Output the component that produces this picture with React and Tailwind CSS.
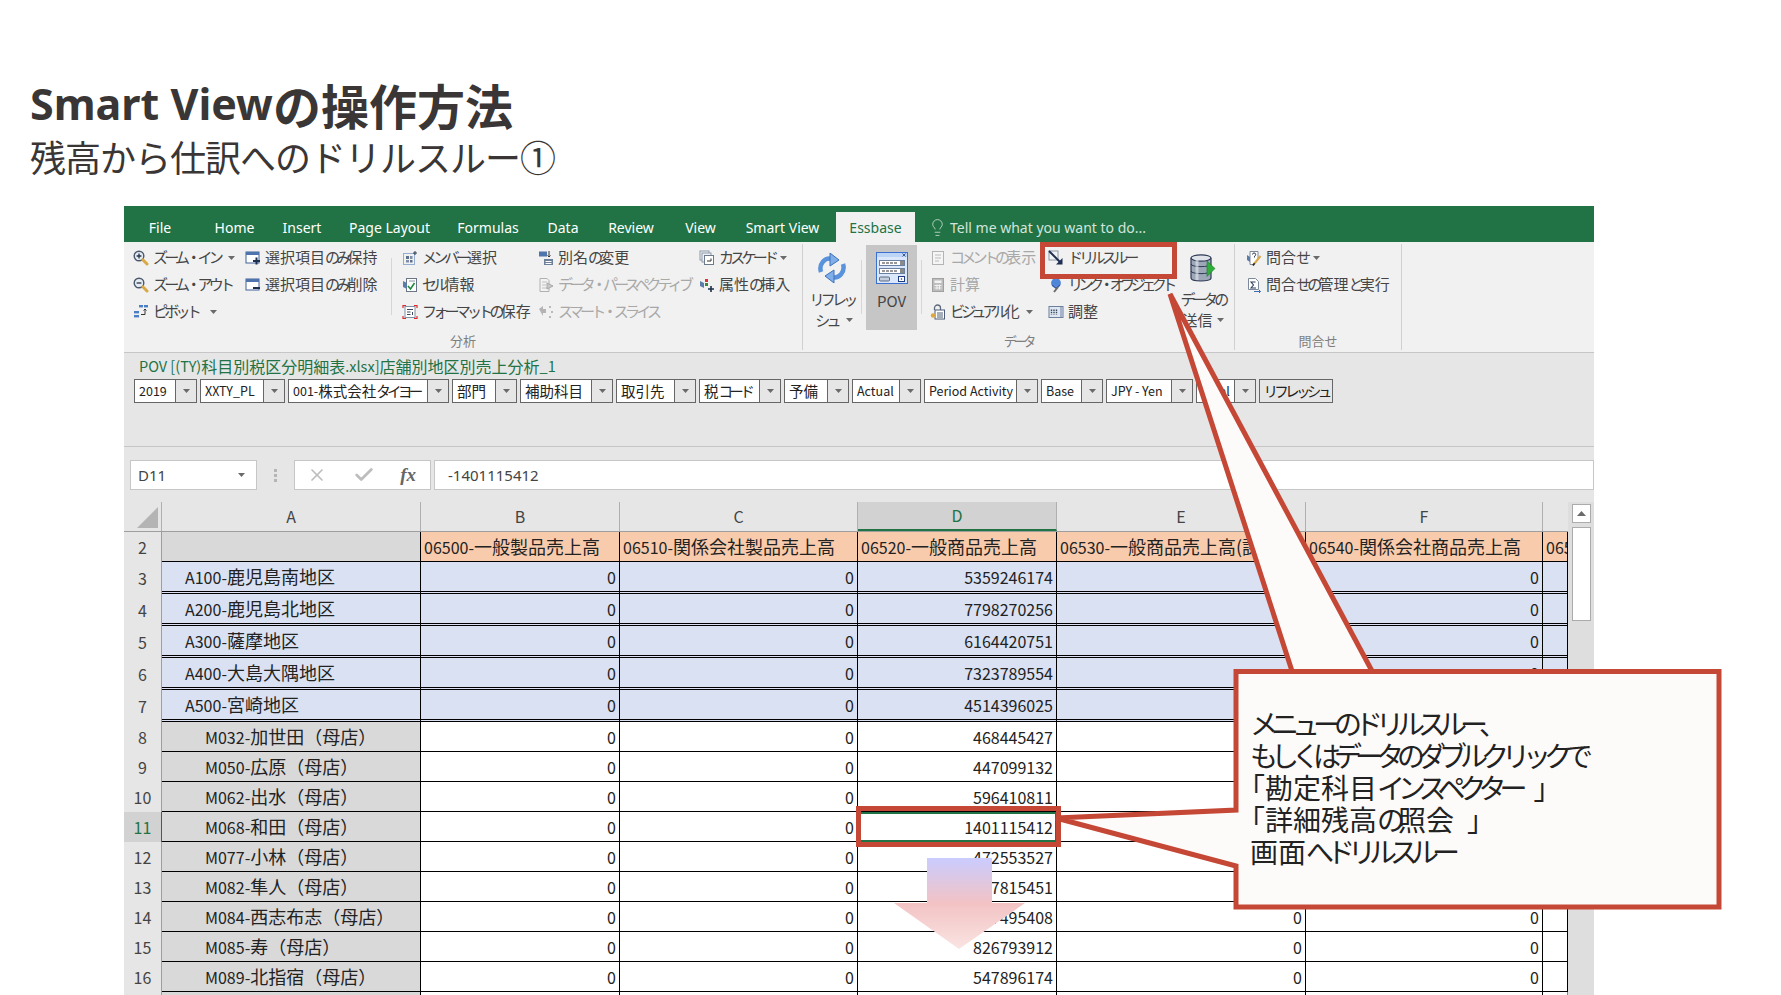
import React from "react";
import { Lightbulb, X, Check } from "lucide-react";

const COLS = "grid grid-cols-[38px_259px_199px_238px_199px_249px_237px_25px] shrink-0";

function J({ t }) {
  const parts = t.split(/([ぁ-ヿ・]+)/);
  return (
    <>
      {parts.map((p, i) =>
        i % 2 === 1 ? (
          <span key={i} className="tracking-[-0.25em]">{p}</span>
        ) : (
          <span key={i}>{p}</span>
        )
      )}
    </>
  );
}

const S = ({ children, w = 16, h = 16, vb = "0 0 16 16" }) => (
  <svg width={w} height={h} viewBox={vb} fill="none" className="shrink-0">{children}</svg>
);

const Mag = ({ minus }) => (
  <S>
    <circle cx="6" cy="6" r="4.8" fill="#e4ebf3" stroke="#4b586c" strokeWidth="1.4" />
    <path d={minus ? "M3.6 6h4.8" : "M3.6 6h4.8M6 3.6v4.8"} stroke="#27344a" strokeWidth="1.3" />
    <path d="M9.8 9.8 14 14" stroke="#d8a944" strokeWidth="3" strokeLinecap="round" />
  </S>
);
const Pivot = () => (
  <S>
    <rect x="6" y="1" width="4" height="2.4" fill="#4a7fc8" />
    <rect x="11" y="1" width="4" height="2.4" fill="#4a7fc8" />
    <rect x="1" y="7" width="5" height="2.4" fill="#4a7fc8" />
    <rect x="1" y="11" width="5" height="2.4" fill="#4a7fc8" />
    <path d="M8 10.5h4V5M10.5 6.5 12 5l1.5 1.5" stroke="#333" />
  </S>
);
const Win = ({ minus }) => (
  <S>
    <rect x="1" y="2" width="13" height="11" fill="#fff" stroke="#42639a" />
    <rect x="1" y="2" width="13" height="3" fill="#4f74ad" />
    <path d={minus ? "M8 11h7" : "M8 11h7M11.5 7.5v7"} stroke="#1d2f4d" strokeWidth="2" />
  </S>
);
const Member = () => (
  <S>
    <rect x="1.5" y="3.5" width="11" height="11" stroke="#3a66b0" strokeDasharray="1 1" />
    <rect x="4" y="6" width="3" height="3" fill="#5d6f8e" />
    <rect x="8" y="6" width="2.5" height="3" fill="#7e8ea8" />
    <rect x="4" y="10" width="3" height="2.5" fill="#7e8ea8" />
    <rect x="8" y="10" width="2.5" height="2.5" fill="#5d6f8e" />
    <path d="M11 3h4M13 1v4" stroke="#2d3a50" />
  </S>
);
const CellInfo = () => (
  <S>
    <rect x="4.5" y="1.5" width="10" height="13" fill="#fff" stroke="#6a7686" />
    <path d="M1 4 5 6v6L1 10z" fill="#5b7ba8" />
    <path d="M6 9l2.5 3 4-6" stroke="#1f8a3c" strokeWidth="1.6" />
    <path d="M7 4h6" stroke="#8894a5" />
  </S>
);
const Format = () => (
  <S>
    <path d="M1 4V1.5h3M12 1.5h3V4M15 12v2.5h-3M4 14.5H1V12" stroke="#e02828" strokeWidth="1.2" />
    <rect x="3" y="2.5" width="10" height="11" fill="#fff" stroke="#8190a5" />
    <path d="M5 5.5h6M5 8h3.5M5 10.5h3.5M10.5 8v3" stroke="#3e4a5c" />
  </S>
);
const Alias = () => (
  <S>
    <rect x="1" y="1.5" width="8" height="5" fill="#4f74ad" />
    <rect x="6" y="9" width="9" height="6" fill="#6e7f98" />
    <path d="M7.5 11.5h6M7.5 13.5h6" stroke="#fff" />
    <path d="M11 1v6M9.5 5.5 11 7l1.5-1.5" stroke="#333" />
  </S>
);
const Persp = () => (
  <S>
    <path d="M2 1.5h7l2 2v11H2z" fill="#f3f3f3" stroke="#b0b0b0" />
    <path d="M4 5h5M4 8h4M4 11h5" stroke="#c0c0c0" />
    <path d="M9 6l6 3-6 3z" fill="#c9c9c9" stroke="#a8a8a8" />
  </S>
);
const Slice = () => (
  <S>
    <path d="M1 5l4-3v3h3v4H5v3z" fill="#b4b4b4" />
    <path d="M11 3h3M14 7v2M11 13h3" stroke="#a8a8a8" strokeWidth="1.5" strokeDasharray="2 1" />
  </S>
);
const Cascade = () => (
  <S>
    <rect x="1" y="1" width="9" height="9" fill="#eef1f5" stroke="#8d99a9" />
    <rect x="3" y="3" width="9" height="9" fill="#eef1f5" stroke="#8d99a9" />
    <rect x="5.5" y="5.5" width="9" height="9" fill="#fff" stroke="#6d7a8c" />
    <path d="M8 11h4M12 8.5V11" stroke="#333" />
  </S>
);
const Attr = () => (
  <S>
    <path d="M1 4l4 2v5L1 9z" fill="#5b7ba8" />
    <rect x="6" y="2" width="3" height="3" fill="#d33" />
    <rect x="6" y="6" width="3" height="3" fill="#3a8a3a" />
    <path d="M9 12h6M12 9v6" stroke="#1d2f4d" strokeWidth="1.6" />
  </S>
);
const Comment = () => (
  <S>
    <rect x="2.5" y="1.5" width="11" height="13" fill="#f5f5f5" stroke="#b4b4b4" />
    <path d="M5 5h6M5 8h6M5 11h4" stroke="#bcbcbc" />
  </S>
);
const Calc = () => (
  <S>
    <rect x="2.5" y="1.5" width="11" height="13" fill="#bdbdbd" stroke="#a0a0a0" />
    <rect x="4.5" y="3.5" width="7" height="2.5" fill="#f3f3f3" />
    <path d="M4.5 8.5h7M4.5 11h7M7 7.5v5M9.5 7.5v5" stroke="#f3f3f3" />
  </S>
);
const Vis = () => (
  <S>
    <path d="M4.5 6V4a3 3 0 0 1 6 0v2" stroke="#5d6a7c" strokeWidth="1.3" />
    <rect x="5" y="6" width="9.5" height="9" fill="#fff" stroke="#4d5d76" />
    <path d="M7 9h6M7 11h6M7 13h6" stroke="#4d5d76" />
    <circle cx="3" cy="11.5" r="2.2" fill="#dba93f" />
  </S>
);
const Drill = () => (
  <S>
    <rect x="1" y="1" width="9" height="9" fill="#f3f3f3" stroke="#8b97a8" />
    <path d="M1 1 13.5 13.5" stroke="#1f2f52" strokeWidth="2" />
    <path d="M14.5 8v6.5H8z" fill="#1f2f52" />
  </S>
);
const Link = () => (
  <S>
    <path d="M8 1a6 6 0 0 1 5 5l-5 4-5-4a6 6 0 0 1 5-5z" fill="#4f86d8" />
    <path d="M3 6l5 4 5-4-1 3-4 3-4-3z" fill="#2e5fb2" />
    <path d="M10 10l-4 5" stroke="#6a6a6a" strokeWidth="2" />
  </S>
);
const Adjust = () => (
  <S>
    <rect x="1" y="2.5" width="14" height="11" fill="#dfe7f2" stroke="#6c7f9c" />
    <rect x="12" y="3" width="3" height="10" fill="#a5b4ca" />
    <path d="M3.5 5.5v5M6 5.5v5M8.5 5.5v5" stroke="#3a4a62" strokeWidth="1.4" strokeDasharray="1.5 .8" />
  </S>
);
const Query = () => (
  <S>
    <path d="M4 1.5h8v8l-4 5H4z" fill="#fff" stroke="#7d8a9c" />
    <path d="M6.5 4.5a1.6 1.6 0 1 1 2 1.6V7.5" stroke="#2d3a50" />
    <path d="M1 5l3 2v5L1 10z" fill="#5b7ba8" />
    <path d="M14.5 6 8 14" stroke="#d8a944" strokeWidth="2" />
    <path d="M8.5 13.2 7 15.5" stroke="#222" strokeWidth="1.6" />
  </S>
);
const QMan = () => (
  <S>
    <path d="M2.5 1.5h7l3 3v8h-10z" fill="#fff" stroke="#7d8a9c" />
    <path d="M9.5 5H5l2.5 3L5 11h5" stroke="#2e3f5c" strokeWidth="1.1" />
    <path d="M8 14.5h6.5M13 13l1.5 1.5L13 16" stroke="#3c6eb4" />
  </S>
);

const Refresh = () => (
  <svg width="30" height="30" viewBox="0 0 30 30" fill="none">
    <path d="M4 19C1.5 11 8 4 15 6" stroke="#5a92dc" strokeWidth="4.5" />
    <path d="M13 0l9 7-9 6z" fill="#7faee8" stroke="#3c70bd" strokeLinejoin="round" />
    <path d="M26 11c2.5 8-4 15-11 13" stroke="#5a92dc" strokeWidth="4.5" />
    <path d="M17 30l-9-7 9-6z" fill="#7faee8" stroke="#3c70bd" strokeLinejoin="round" />
  </svg>
);
const PovIcon = () => (
  <svg width="32" height="32" viewBox="0 0 32 32" fill="none">
    <rect x=".5" y=".5" width="31" height="31" fill="#dbe8fb" stroke="#3b6fd0" />
    <rect x="1" y="1" width="30" height="4" fill="#bcd4f5" />
    <path d="M26.5 1.5l3 3M29.5 1.5l-3 3" stroke="#1f3a80" strokeWidth=".8" />
    <rect x="3.5" y="8.5" width="25" height="5" fill="#fff" stroke="#6b7f9f" />
    <rect x="3.5" y="16.5" width="25" height="5" fill="#fff" stroke="#6b7f9f" />
    <path d="M6 11h16M6 19h16" stroke="#333" strokeDasharray="3 1" />
    <rect x="24" y="9" width="4" height="4" fill="#8a8a8a" />
    <rect x="24" y="17" width="4" height="4" fill="#8a8a8a" />
    <rect x="3.5" y="25" width="10" height="4" rx="1" fill="#c4cede" stroke="#5a6a84" />
    <rect x="22.5" y="24.5" width="6" height="5" fill="#fff" stroke="#1f3a80" />
    <circle cx="25.5" cy="27" r=".8" fill="#1f3a80" />
  </svg>
);
const Db = () => (
  <svg width="26" height="28" viewBox="0 0 26 28" fill="none">
    <path d="M1 4v20c0 4 20 4 20 0V4" fill="#9da7b8" stroke="#2e3a55" strokeWidth="1.2" />
    <path d="M1 10c0 3.5 20 3.5 20 0M1 17c0 3.5 20 3.5 20 0" stroke="#2e3a55" />
    <ellipse cx="11" cy="4" rx="10" ry="3.2" fill="#dfe3ea" stroke="#2e3a55" strokeWidth="1.2" />
    <path d="M7 6v20" stroke="#e6e9ef" strokeWidth="3" opacity=".6" />
    <path d="M17 7l8 7.5-8 8z" fill="#2fae3a" stroke="#1d7a28" strokeWidth=".6" />
  </svg>
);

const Caret = ({ cls = "" }) => (
  <svg width="7" height="4" viewBox="0 0 7 4" className={"shrink-0 " + cls}>
    <path d="M0 0h7L3.5 4z" fill="#6a6a6a" />
  </svg>
);

function Item({ icon, label, muted, caret, tight }) {
  return (
    <div className={"h-[27px] flex items-center whitespace-nowrap " + (muted ? "text-[#a8a8a8]" : "text-[#454545]")}>
      <span className="w-[20px] shrink-0 flex">{icon}</span>
      {tight ? <span className="tracking-[-0.3em]">{label}</span> : <span><J t={label} /></span>}
      {caret}
    </div>
  );
}

const tabs = [
  ["File", "w-[72px]"],
  ["Home", "w-[77px]"],
  ["Insert", "w-[58px]"],
  ["Page Layout", "w-[117px]"],
  ["Formulas", "w-[80px]"],
  ["Data", "w-[70px]"],
  ["Review", "w-[66px]"],
  ["View", "w-[73px]"],
  ["Smart View", "w-[91px]"],
];

const povs = [
  ["2019", "", "w-[63px]"],
  ["XXTY_PL", "", "w-[85px]"],
  ["001-", "株式会社タイヨー", "w-[161px]"],
  ["", "部門", "w-[65px]"],
  ["", "補助科目", "w-[93px]"],
  ["", "取引先", "w-[80px]"],
  ["", "税コード", "w-[82px]"],
  ["", "予備", "w-[65px]"],
  ["Actual", "", "w-[69px]"],
  ["Period Activity", "", "w-[114px]"],
  ["Base", "", "w-[62px]"],
  ["JPY - Yen", "", "w-[87px]"],
  ["Total", "", "w-[60px]"],
];

const headers = [
  "06500-一般製品売上高",
  "06510-関係会社製品売上高",
  "06520-一般商品売上高",
  "06530-一般商品売上高(課税)",
  "06540-関係会社商品売上高",
  "06550-売上高",
];

const rows = [
  [3, "A100-鹿児島南地区", 5359246174, 1],
  [4, "A200-鹿児島北地区", 7798270256, 1],
  [5, "A300-薩摩地区", 6164420751, 1],
  [6, "A400-大島大隅地区", 7323789554, 1],
  [7, "A500-宮崎地区", 4514396025, 1],
  [8, "M032-加世田（母店）", 468445427, 0],
  [9, "M050-広原（母店）", 447099132, 0],
  [10, "M062-出水（母店）", 596410811, 0],
  [11, "M068-和田（母店）", 1401115412, 0],
  [12, "M077-小林（母店）", 472553527, 0],
  [13, "M082-隼人（母店）", 467815451, 0],
  [14, "M084-西志布志（母店）", 447495408, 0],
  [15, "M085-寿（母店）", 826793912, 0],
  [16, "M089-北指宿（母店）", 547896174, 0],
];

function Row({ n, label, d, top }) {
  const [code, name] = label.split("-");
  const sel = n === 11;
  const line = top ? "border-b-[3px] border-double border-black" : "border-b border-black";
  const bg = top ? "bg-[#d9e1f2]" : "bg-white";
  const h = top ? "h-[32px]" : "h-[30px]";
  const num = "flex items-center justify-end pr-[3px] border-r border-black " + line + " " + bg;
  return (
    <div className={COLS + " " + h}>
      <div className={"flex items-center justify-center border-r " + (sel ? "bg-[#d2d2d2] text-[#217346] border-[#217346]" : "bg-[#e6e6e6] text-[#444] border-[#9e9e9e]")}>{n}</div>
      <div className={"flex items-center whitespace-nowrap border-r border-black text-[#222] " + line + " " + (top ? "pl-[23px] bg-[#d9e1f2]" : "pl-[43px] bg-[#d9d9d9]")}>
        <span>{code}-</span>
        <span className="text-[18px]">{name}</span>
      </div>
      <div className={num}>0</div>
      <div className={num}>0</div>
      <div className={num + (sel ? " outline-2 -outline-offset-2 outline-[#217346]" : "")}>{d}</div>
      <div className={num}>0</div>
      <div className={num}>0</div>
      <div className={"border-r border-[#888] " + line + " " + bg} />
    </div>
  );
}

export default function App() {
  return (
    <div className="relative w-[1781px] h-[995px] overflow-hidden bg-white font-['Noto_Sans_CJK_JP',sans-serif] text-[#222]">
      <header className="h-[206px] pl-[30px] pt-[77px] text-[#3a3635]">
        <h1 className="h-[54px] flex items-center font-bold text-[48px] whitespace-nowrap">
          <span className="font-['Noto_Sans',sans-serif] text-[43px]">Smart View</span>
          <span>の操作方法</span>
        </h1>
        <p className="h-[50px] flex items-center text-[36px] tracking-[-1px] whitespace-nowrap">残高から仕訳へのドリルスルー①</p>
      </header>

      <main className="ml-[124px] w-[1470px] h-[789px] flex flex-col bg-[#e6e6e6]">
        <nav className="h-[36px] shrink-0 bg-[#217346] flex text-white text-[14px] font-['Noto_Sans',sans-serif] whitespace-nowrap">
          {tabs.map(([t, w]) => (
            <div key={t} className={w + " flex items-center justify-center pt-[6px]"}>{t}</div>
          ))}
          <div className="ml-[8px] w-[79px] self-end h-[30px] bg-[#f1f1f1] text-[#217346] flex items-center justify-center">Essbase</div>
          <div className="ml-[13px] flex items-center gap-[3px] pt-[6px] text-[#d3e4da]">
            <Lightbulb size={19} strokeWidth={1} />
            <span>Tell me what you want to do...</span>
          </div>
        </nav>

        <section className="h-[111px] bg-[#f1f1f1] border-b border-[#c6c6c6] flex text-[15px] shrink-0">
          <div className="w-[679px] flex flex-col border-r border-[#d0d0d0] my-[2px]">
            <div className="h-[88px] flex pl-[9px]">
              <div className="w-[112px]">
                <Item icon={<Mag />} label="ズーム・イン" caret={<Caret cls="ml-[8px]" />} />
                <Item icon={<Mag minus />} label="ズーム・アウト" />
                <Item icon={<Pivot />} label="ピボット" caret={<Caret cls="ml-[12px]" />} />
              </div>
              <div className="w-[146px]">
                <Item icon={<Win />} label="選択項目のみ保持" />
                <Item icon={<Win minus />} label="選択項目のみ削除" />
              </div>
              <div className="w-px h-[57px] mt-[14px] bg-[#d6d6d6]" />
              <div className="ml-[10px] w-[136px]">
                <Item icon={<Member />} label="メンバー選択" />
                <Item icon={<CellInfo />} label="セル情報" />
                <Item icon={<Format />} label="フォーマットの保存" />
              </div>
              <div className="w-[161px]">
                <Item icon={<Alias />} label="別名の変更" />
                <Item icon={<Persp />} muted label="データ・パースペクティブ" />
                <Item icon={<Slice />} muted label="スマート・スライス" />
              </div>
              <div className="w-[103px]">
                <Item icon={<Cascade />} label="カスケード" caret={<Caret cls="ml-[5px]" />} />
                <Item icon={<Attr />} label="属性の挿入" />
              </div>
            </div>
            <div className="flex-1 flex items-center justify-center text-[13px] text-[#7f7f7f]">分析</div>
          </div>

          <div className="w-[432px] flex flex-col border-r border-[#d0d0d0] my-[2px]">
            <div className="h-[88px] flex">
              <div className="w-[58px] flex flex-col items-center pt-[9px] text-[#454545]">
                <Refresh />
                <div className="h-[21px] mt-[6px] flex items-center"><J t="リフレッ" /></div>
                <div className="h-[20px] flex items-center gap-[4px]"><J t="シュ" /><Caret /></div>
              </div>
              <div className="w-px h-[54px] mt-[16px] bg-[#d6d6d6]" />
              <div className="ml-[4px] w-[51px] h-[85px] mt-[1px] bg-[#c6c6c6] flex flex-col items-center pt-[7px] text-[#454545]">
                <PovIcon />
                <div className="mt-[6px]">POV</div>
              </div>
              <div className="ml-[4px] w-px h-[54px] mt-[16px] bg-[#d6d6d6]" />
              <div className="ml-[8px] w-[118px]">
                <Item icon={<Comment />} muted label="コメントの表示" />
                <Item icon={<Calc />} muted label="計算" />
                <Item icon={<Vis />} label="ビジュアル化" caret={<Caret cls="ml-[6px]" />} />
              </div>
              <div className="w-[128px]">
                <Item icon={<Drill />} label="ドリルスルー" />
                <Item icon={<Link />} tight label="リンク・オブジェクト" />
                <Item icon={<Adjust />} label="調整" />
              </div>
              <div className="w-[54px] flex flex-col items-center pt-[10px] text-[#454545] whitespace-nowrap">
                <Db />
                <div className="h-[21px] mt-[7px] flex items-center"><J t="データの" /></div>
                <div className="h-[20px] flex items-center gap-[4px]">送信<Caret /></div>
              </div>
            </div>
            <div className="flex-1 flex items-center justify-center text-[13px] text-[#7f7f7f]"><J t="データ" /></div>
          </div>

          <div className="w-[167px] flex flex-col border-r border-[#d0d0d0] my-[2px]">
            <div className="h-[88px] pl-[11px]">
              <Item icon={<Query />} label="問合せ" caret={<Caret cls="ml-[6px]" />} />
              <Item icon={<QMan />} label="問合せの管理と実行" />
            </div>
            <div className="flex-1 flex items-center justify-center text-[13px] text-[#7f7f7f]">問合せ</div>
          </div>
        </section>

        <section className="h-[94px] shrink-0 border-b border-[#c6c6c6] flex flex-col">
          <div className="h-[26px] pl-[15px] flex items-center text-[16px] text-[#217346] whitespace-nowrap">
            <span className="text-[14.5px]">POV [(TY)</span>
            <span>科目別税区分明細表</span>
            <span className="text-[14.5px]">.xlsx]</span>
            <span>店舗別地区別売上分析</span>
            <span className="text-[14.5px]">_1</span>
          </div>
          <div className="flex gap-[3px] pl-[10px] text-[14.5px] text-[#222]">
            {povs.map(([latin, cjk, w]) => (
              <div key={latin + cjk} className={w + " h-[24px] flex border border-[#666] bg-white"}>
                <div className="flex-1 min-w-0 flex items-center pl-[4px] whitespace-nowrap overflow-hidden">
                  <span className="text-[12.5px]">{latin}</span>
                  <J t={cjk} />
                </div>
                <div className="w-[21px] shrink-0 bg-[#e6e6e6] border-l border-[#666] flex items-center justify-center"><Caret /></div>
              </div>
            ))}
            <div className="w-[74px] h-[24px] flex items-center justify-center border border-[#666] bg-[#e6e6e6]"><J t="リフレッシュ" /></div>
          </div>
        </section>

        <section className="h-[43px] shrink-0 pt-[13px] flex font-['Noto_Sans',sans-serif] text-[15px] text-[#444]">
          <div className="ml-[6px] w-[127px] h-[30px] bg-white border border-[#c6c6c6] flex items-center justify-between pl-[7px] pr-[11px]">
            D11<Caret />
          </div>
          <div className="w-[37px] flex flex-col items-center justify-center gap-[2px]">
            <i className="w-[3px] h-[3px] bg-[#b5b5b5]" />
            <i className="w-[3px] h-[3px] bg-[#b5b5b5]" />
            <i className="w-[3px] h-[3px] bg-[#b5b5b5]" />
          </div>
          <div className="w-[137px] h-[30px] bg-white border border-[#c6c6c6] flex items-center justify-between pl-[12px] pr-[14px] text-[#bdbdbd]">
            <X size={20} strokeWidth={2} />
            <Check size={22} strokeWidth={3} />
            <span className="font-['Liberation_Serif',serif] italic font-bold text-[19px] text-[#666]">fx</span>
          </div>
          <div className="ml-[3px] flex-1 h-[30px] bg-white border border-[#c6c6c6] flex items-center pl-[13px]">-1401115412</div>
        </section>

        <section className="mt-[12px] flex flex-1 min-h-0 text-[16px]">
          <div className="w-[1444px] flex flex-col">
            <div className={COLS + " h-[30px] text-[#444] border-b border-[#9e9e9e]"}>
              <div className="border-r border-[#b0b0b0] flex">
                <svg width="36" height="29" viewBox="0 0 36 29" className="shrink-0"><path d="M13 26 34 5v21z" fill="#b4b4b4" /></svg>
              </div>
              {["A", "B", "C", "D", "E", "F"].map((c) => (
                <div key={c} className={c === "D" ? "flex items-center justify-center pb-[2px] border-r border-[#b0b0b0] bg-[#d2d2d2] text-[#217346] border-b-2 border-b-[#217346]" : "flex items-center justify-center pb-[2px] border-r border-[#b0b0b0]"}>{c}</div>
              ))}
              <div />
            </div>
            <div className={COLS + " h-[30px]"}>
              <div className="flex items-center justify-center bg-[#e6e6e6] text-[#444] border-r border-[#9e9e9e]">2</div>
              <div className="bg-[#d9d9d9] border-r border-b border-black" />
              {headers.map((h) => {
                const [code, name] = h.split("-");
                return (
                  <div key={h} className="bg-[#f8cbad] border-r border-b border-black flex items-center pl-[3px] whitespace-nowrap overflow-hidden">
                    <span>{code}-</span>
                    <span className="text-[18px]">{name}</span>
                  </div>
                );
              })}
            </div>
            {rows.map(([n, label, d, top]) => (
              <Row key={n} n={n} label={label} d={d} top={!!top} />
            ))}
            <div className={COLS + " h-[30px]"}>
              <div className="bg-[#e6e6e6] border-r border-[#9e9e9e]" />
              <div className="bg-[#d9d9d9] border-r border-black" />
              <div className="bg-white border-r border-black" />
              <div className="bg-white border-r border-black" />
              <div className="bg-white border-r border-black" />
              <div className="bg-white border-r border-black" />
              <div className="bg-white border-r border-black" />
              <div className="bg-white border-r border-[#888]" />
            </div>
          </div>
          <div className="w-[26px] pl-[4px] pt-[2px] bg-[#dedede]">
            <div className="w-[19px] h-[19px] bg-white border border-[#ababab] flex items-center justify-center">
              <svg width="9" height="5" viewBox="0 0 9 5"><path d="M0 5h9L4.5 0z" fill="#6a6a6a" /></svg>
            </div>
            <div className="mt-[4px] w-[19px] h-[94px] bg-white border border-[#ababab]" />
          </div>
        </section>
      </main>

      <svg className="absolute inset-0 pointer-events-none" width="1781" height="995" viewBox="0 0 1781 995" fill="none">
        <defs>
          <linearGradient id="arrowGrad" x1="0" y1="0" x2="0" y2="1">
            <stop offset="0" stopColor="#caccff" />
            <stop offset="0.5" stopColor="#f3c3c4" />
            <stop offset="1" stopColor="#f9e4e2" />
          </linearGradient>
        </defs>
        <path d="M927 858h65v45h33l-66 46-65-46h33z" fill="url(#arrowGrad)" />
        <rect x="1042.5" y="244.5" width="132" height="32" stroke="#c54836" strokeWidth="5" />
        <rect x="858.5" y="808.5" width="200" height="36" stroke="#c54836" strokeWidth="5" />
        <path d="M1292 671 1170 294 1372 671" fill="#fdfbf9" stroke="#c54836" strokeWidth="5" strokeLinejoin="miter" />
        <path d="M1236 671.5H1719V907H1236V866L1056 818 1236 810Z" fill="#fdfbf9" stroke="#c54836" strokeWidth="5" />
      </svg>
      <div className="absolute left-[1250px] top-[667px] h-[240px] flex flex-col justify-center text-[28px] leading-[32px] text-[#222] whitespace-nowrap">
        <div><J t="メニューのドリルスルー" /><span className="ml-[-2px]">、</span></div>
        <div><J t="もしくはデータのダブルクリックで" /></div>
        <div className="-ml-[13px]"><J t="「勘定科目インスペクター" /><span className="ml-[13px]">」</span></div>
        <div className="-ml-[13px]"><J t="「詳細残高の照会" /><span className="ml-[13px]">」</span></div>
        <div><J t="画面へドリルスルー" /></div>
      </div>
    </div>
  );
}
